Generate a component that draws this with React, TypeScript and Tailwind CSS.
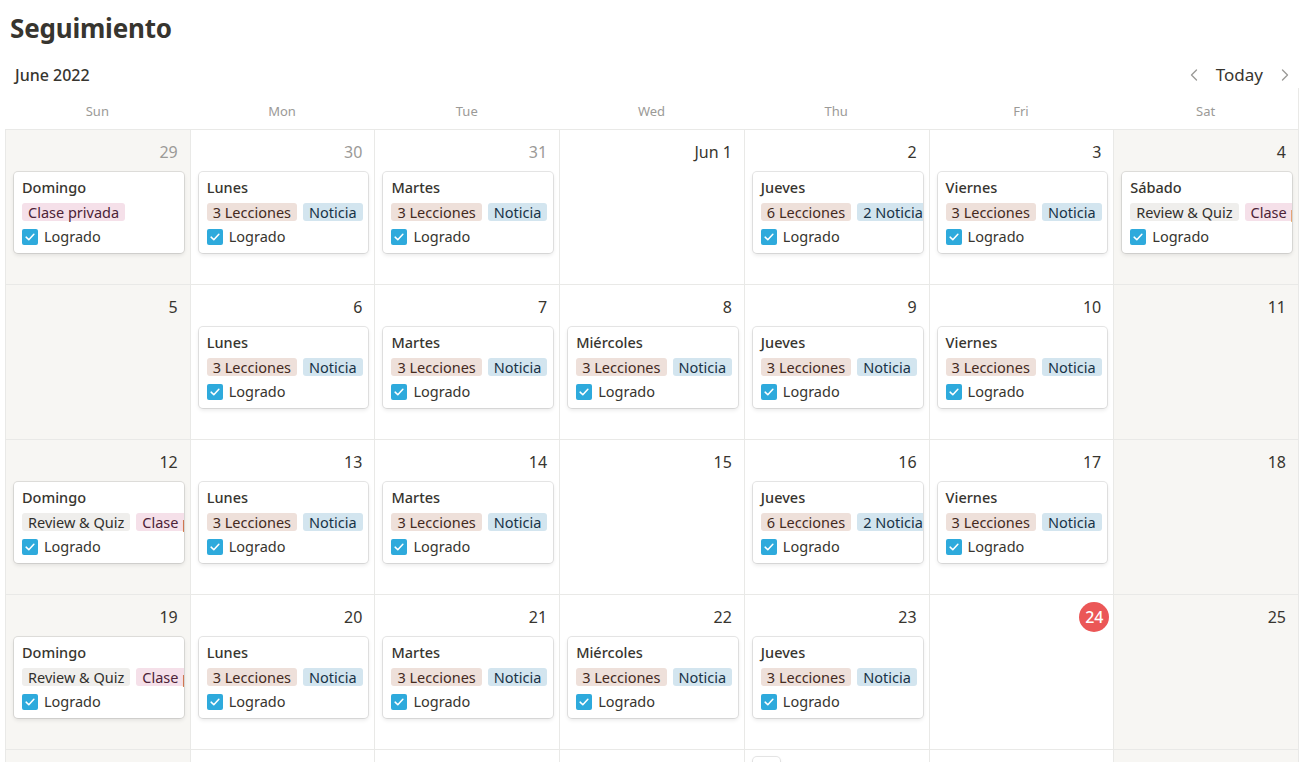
import { ChevronLeft, ChevronRight } from "lucide-react";

type TTag = { label: string; color: "brown" | "blue" | "pink" | "gray" };
type TCard = { title: string; tags: TTag[] };
type TDay = {
  label: string;
  muted?: boolean;
  today?: boolean;
  card?: TCard;
  peek?: boolean;
};

const tagColors: Record<TTag["color"], string> = {
  brown: "bg-[#eee0da] text-[#442a1e]",
  blue: "bg-[#d3e5ef] text-[#183347]",
  pink: "bg-[#f5e0e9] text-[#4c2337]",
  gray: "bg-[#efeeec] text-[#32302c]",
};

const lecciones = (n = 3): TTag => ({ label: `${n} Lecciones`, color: "brown" });
const noticia = (label = "Noticia"): TTag => ({ label, color: "blue" });
const review: TTag = { label: "Review & Quiz", color: "gray" };
const clase: TTag = { label: "Clase privada", color: "pink" };

const weekday = (title: string): TCard => ({
  title,
  tags: [lecciones(), noticia()],
});

const weeks: TDay[][] = [
  [
    { label: "29", muted: true, card: { title: "Domingo", tags: [clase] } },
    { label: "30", muted: true, card: weekday("Lunes") },
    { label: "31", muted: true, card: weekday("Martes") },
    { label: "Jun 1" },
    { label: "2", card: { title: "Jueves", tags: [lecciones(6), noticia("2 Noticias")] } },
    { label: "3", card: weekday("Viernes") },
    { label: "4", card: { title: "Sábado", tags: [review, clase] } },
  ],
  [
    { label: "5" },
    { label: "6", card: weekday("Lunes") },
    { label: "7", card: weekday("Martes") },
    { label: "8", card: weekday("Miércoles") },
    { label: "9", card: weekday("Jueves") },
    { label: "10", card: weekday("Viernes") },
    { label: "11" },
  ],
  [
    { label: "12", card: { title: "Domingo", tags: [review, clase] } },
    { label: "13", card: weekday("Lunes") },
    { label: "14", card: weekday("Martes") },
    { label: "15" },
    { label: "16", card: { title: "Jueves", tags: [lecciones(6), noticia("2 Noticias")] } },
    { label: "17", card: weekday("Viernes") },
    { label: "18" },
  ],
  [
    { label: "19", card: { title: "Domingo", tags: [review, clase] } },
    { label: "20", card: weekday("Lunes") },
    { label: "21", card: weekday("Martes") },
    { label: "22", card: weekday("Miércoles") },
    { label: "23", card: weekday("Jueves") },
    { label: "24", today: true },
    { label: "25" },
  ],
  [
    { label: "26" },
    { label: "27" },
    { label: "28" },
    { label: "29" },
    { label: "30", peek: true },
    { label: "Jul 1" },
    { label: "2" },
  ],
];

const dayNames = ["Sun", "Mon", "Tue", "Wed", "Thu", "Fri", "Sat"];

const Check = () => (
  <span className="flex h-4 w-4 shrink-0 items-center justify-center rounded-[2px] bg-[#2eaadc]">
    <svg viewBox="0 0 14 14" className="h-3 w-3" fill="none">
      <path
        d="M2.5 7.2 5.6 10.2 11.5 3.8"
        stroke="white"
        strokeWidth="1.8"
        strokeLinecap="round"
        strokeLinejoin="round"
      />
    </svg>
  </span>
);

const Card = ({ card }: { card: TCard }) => (
  <div className="ml-2 mr-[6px] mt-[2px] h-[81px] overflow-hidden rounded-[4px] bg-white px-2 pt-[5px] shadow-[0_0_0_1px_rgba(15,15,15,0.1),0_2px_4px_rgba(15,15,15,0.1)]">
    <div className="h-5 text-[14.5px] leading-5 font-medium text-[#37352f] whitespace-nowrap">
      {card.title}
    </div>
    <div className="mt-[6px] flex h-[18px] gap-[6px] whitespace-nowrap">
      {card.tags.map((tag) => (
        <span
          key={tag.label}
          className={`shrink-0 rounded-[3px] px-[6px] text-[14.5px] leading-[18px] ${tagColors[tag.color]}`}
        >
          {tag.label}
        </span>
      ))}
    </div>
    <div className="mt-[6px] flex h-5 items-center gap-[6px] text-[14.5px] text-[#37352f]">
      <Check />
      <span>Logrado</span>
    </div>
  </div>
);

const DayCell = ({ day, weekend }: { day: TDay; weekend: boolean }) => (
  <div
    className={`h-[155px] border-t border-l border-[#e9e9e7] ${weekend ? "bg-[#f7f6f3]" : "bg-white"}`}
  >
    <div className="flex h-[40px] items-center justify-end pr-[12px] pt-[4px]">
      {day.today ? (
        <span className="-mr-[8px] flex h-[30px] w-[30px] items-center justify-center rounded-full bg-[#eb5757] text-[16px] font-medium text-white">
          {day.label}
        </span>
      ) : (
        <span
          className={`text-[16px] ${day.muted ? "text-[#9b9a97]" : "text-[#37352f]"}`}
        >
          {day.label}
        </span>
      )}
    </div>
    {day.card && <Card card={day.card} />}
    {day.peek && (
      <div className="ml-2 -mt-[33px] h-10 w-[27px] rounded-[4px] bg-white shadow-[0_0_0_1px_rgba(15,15,15,0.1),0_2px_4px_rgba(15,15,15,0.1)]" />
    )}
  </div>
);

export default function App() {
  return (
    <div className="h-[762px] overflow-hidden bg-white font-['Noto_Sans',sans-serif] text-[#37352f]">
      <h1 className="px-[10px] pt-[10px] text-[26px] leading-[36px] font-bold tracking-[-0.2px]">
        Seguimiento
      </h1>
      <div className="flex items-center justify-between pl-[15px] pr-[8px] pt-[16px]">
        <div className="text-[16px] font-medium">June 2022</div>
        <div className="flex items-center gap-[12px] text-[#9b9a97]">
          <ChevronLeft size={20} strokeWidth={1.6} />
          <span className="text-[17px] text-[#37352f]">Today</span>
          <ChevronRight size={20} strokeWidth={1.6} />
        </div>
      </div>
      <div className="ml-[5px] mr-[4px] border-r border-[#e9e9e7]">
        <div className="grid grid-cols-7 pt-[10px]">
          {dayNames.map((d) => (
            <div key={d} className="h-[31px] text-center text-[13px] leading-[26px] text-[#9b9a97]">
              {d}
            </div>
          ))}
        </div>
        {weeks.map((week, wi) => (
          <div key={wi} className="grid grid-cols-7">
            {week.map((day, di) => (
              <DayCell key={di} day={day} weekend={di === 0 || di === 6} />
            ))}
          </div>
        ))}
      </div>
    </div>
  );
}
